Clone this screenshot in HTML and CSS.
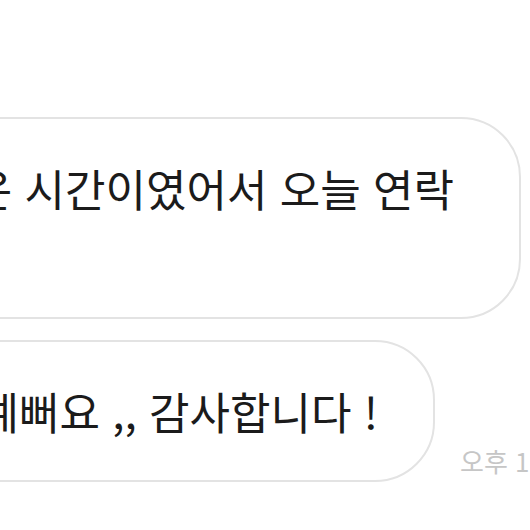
FILE: index.html
```html
<!DOCTYPE html>
<html lang="ko">
<head>
    <meta charset="UTF-8">
    <title>채팅</title>
    <link rel="stylesheet" href="styles.css">
</head>
<body>

<div class="chat">
    <div class="row row-wide">
        <div class="bubble bubble-wrapped">오늘 정말 좋은 시간이였어서 오늘 연락<br>드려요</div>
    </div>
    <div class="row">
        <div class="bubble">너무 예뻐요 ,, 감사합니다 !</div>
        <span class="time">오후 1:30</span>
    </div>
</div>

</body>
</html>
```

FILE: styles.css
```css
body {
    margin: 0;
    overflow: hidden;
    background: #fff;
    font-family: "Noto Sans CJK KR", "Noto Sans", sans-serif;
    color: #1b1b1b;
}
.chat {
    display: flex;
    flex-direction: column;
    gap: 21px;
    padding-top: 117px;
}
.row {
    display: flex;
    justify-content: flex-end;
    align-items: flex-end;
    white-space: nowrap;
}
.row-wide {
    padding-right: 9px;
}
.bubble {
    flex-shrink: 0;
    border: 2px solid #e3e3e3;
    border-radius: 60px;
    padding: 39px 55px 39px 40px;
    font-size: 44px;
    line-height: 60px;
}
.bubble-wrapped {
    padding-right: 65px;
}
.time {
    flex: 0 0 70px;
    min-width: 0;
    margin-left: 25px;
    margin-bottom: 6px;
    font-size: 26px;
    line-height: 30px;
    color: #c6c6c6;
}
```
